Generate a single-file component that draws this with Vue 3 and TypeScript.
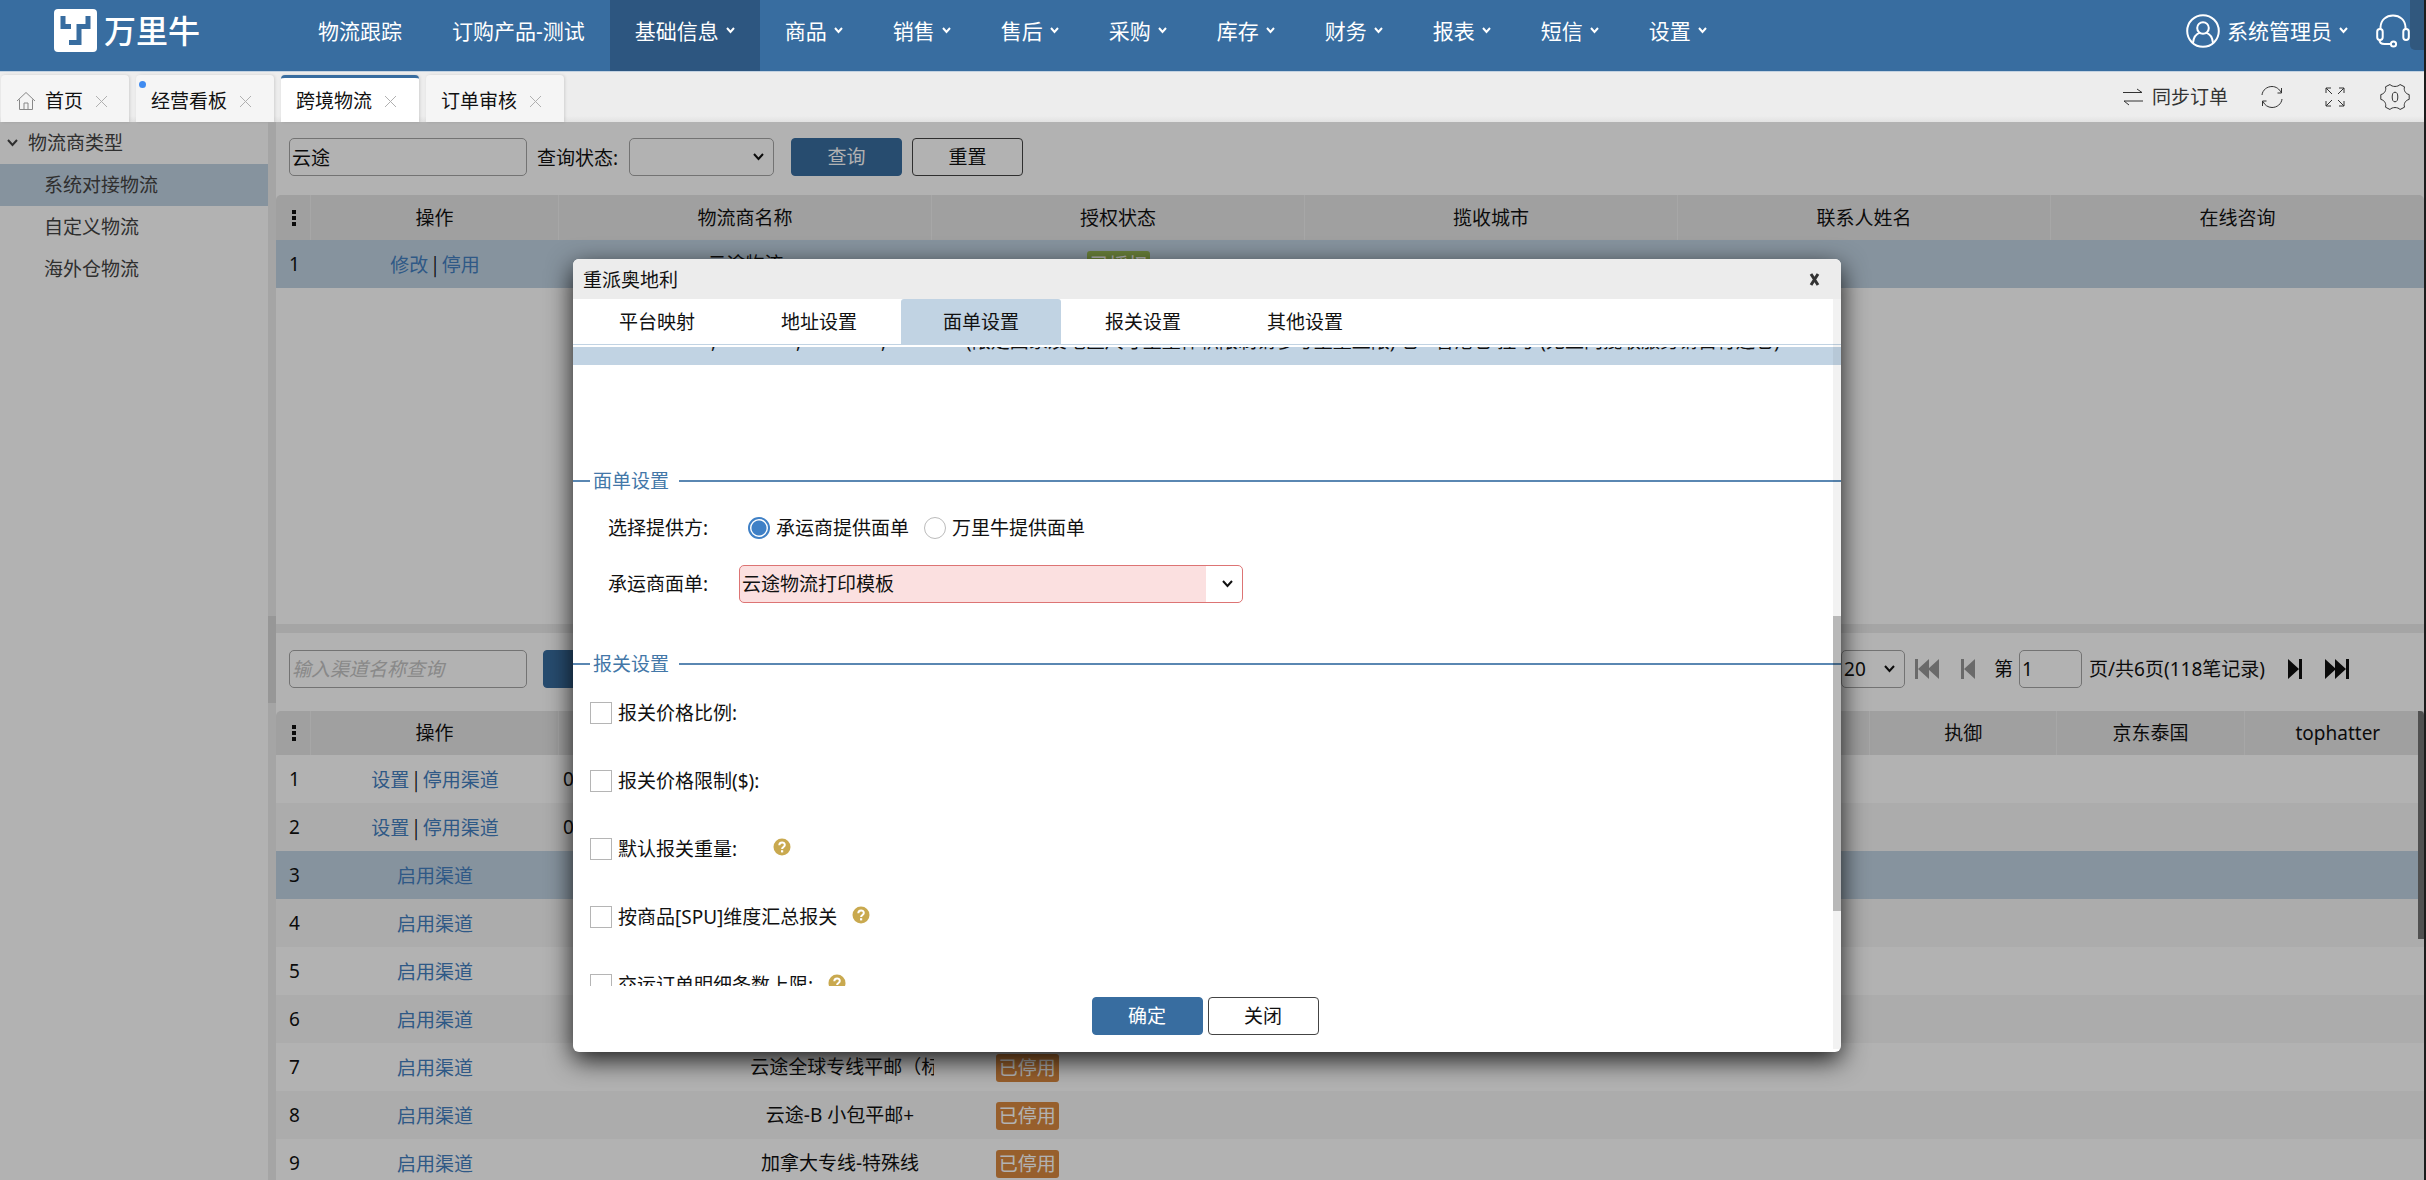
<script setup lang="ts">
import { ref } from 'vue'

interface NavItem {
  label: string
  menu: boolean
  active?: boolean
}
interface PageTab {
  label: string
  home?: boolean
  dot?: boolean
  active?: boolean
}
interface Channel {
  no: number
  enabled: boolean
  code: string
  name: string
}
interface Option {
  label: string
  wideGap: boolean
  help: boolean
  checked: boolean
}

const navItems: NavItem[] = [
  { label: '物流跟踪', menu: false },
  { label: '订购产品-测试', menu: false },
  { label: '基础信息', menu: true, active: true },
  { label: '商品', menu: true },
  { label: '销售', menu: true },
  { label: '售后', menu: true },
  { label: '采购', menu: true },
  { label: '库存', menu: true },
  { label: '财务', menu: true },
  { label: '报表', menu: true },
  { label: '短信', menu: true },
  { label: '设置', menu: true },
]

const pageTabs: PageTab[] = [
  { label: '首页', home: true },
  { label: '经营看板', dot: true },
  { label: '跨境物流', active: true },
  { label: '订单审核' },
]

const logisticsTypes = ['系统对接物流', '自定义物流', '海外仓物流']
const providerColumns = ['物流商名称', '授权状态', '揽收城市', '联系人姓名', '在线咨询']
const channelColumns = ['', '', '', '', '', '', '', '执御', '京东泰国', 'tophatter']

const channels: Channel[] = [
  { no: 1, enabled: true, code: '0', name: '' },
  { no: 2, enabled: true, code: '0', name: '' },
  { no: 3, enabled: false, code: '', name: '' },
  { no: 4, enabled: false, code: '', name: '' },
  { no: 5, enabled: false, code: '', name: '' },
  { no: 6, enabled: false, code: '', name: '' },
  { no: 7, enabled: false, code: '', name: '云途全球专线平邮（标' },
  { no: 8, enabled: false, code: '', name: '云途-B 小包平邮+' },
  { no: 9, enabled: false, code: '', name: '加拿大专线-特殊线' },
]

const dialogTabs = ['平台映射', '地址设置', '面单设置', '报关设置', '其他设置']

const keyword = ref('云途')
const channelKeyword = ref('')
const status = ref('')
const pageSize = ref('20')
const page = ref('1')
const provider = ref('carrier')
const template = ref('云途物流打印模板')
const options = ref<Option[]>([
  { label: '报关价格比例:', wideGap: false, help: false, checked: false },
  { label: '报关价格限制($):', wideGap: false, help: false, checked: false },
  { label: '默认报关重量:', wideGap: true, help: true, checked: false },
  { label: '按商品[SPU]维度汇总报关', wideGap: false, help: true, checked: false },
  { label: '交运订单明细条数上限:', wideGap: false, help: true, checked: false },
])
</script>

<template>
  <div class="app">
    <header class="topbar">
      <div class="logo">
        <svg class="logo-mark" viewBox="0 0 43 43">
          <rect width="43" height="43" rx="4" fill="#fff" />
          <path d="M9 7v10.500h8M34 7v10.500h-9v16h-10" fill="none" stroke="#386da0" stroke-width="5" />
        </svg>
        <span class="logo-name">万里牛</span>
      </div>
      <nav class="nav">
        <a v-for="n in navItems" :key="n.label" href="#" class="nav-item" :class="{ active: n.active }">
          <span>{{ n.label }}</span>
          <svg v-if="n.menu" class="nav-arrow" viewBox="0 0 9 7"><path d="M1 1l3.500 4L8 1" /></svg>
        </a>
      </nav>
      <div class="account">
        <a href="#" class="user">
          <svg class="avatar" viewBox="0 0 34 34">
            <circle cx="17" cy="17" r="15.800" />
            <circle cx="17" cy="14" r="5.800" />
            <path d="M7 29c.5-6 4-9.500 7.200-10.400M27 29c-.5-6-4-9.500-7.200-10.400" />
          </svg>
          <span>系统管理员</span>
          <svg class="nav-arrow" viewBox="0 0 9 7"><path d="M1 1l3.500 4L8 1" /></svg>
        </a>
        <button class="icon-button" aria-label="客服">
          <svg class="headset" viewBox="0 0 34 34">
            <path d="M4.500 16V13C5 6 10 1.500 17 1.500S29 6 29.500 13v3" />
            <rect x="1.200" y="15" width="5.500" height="11" rx="2.700" />
            <rect x="27.300" y="15" width="5.500" height="11" rx="2.700" />
            <path d="M3.500 26c0 3 2 4 5 4h6" />
            <circle cx="17.500" cy="30" r="2.600" />
          </svg>
        </button>
      </div>
      <div class="corner"></div>
    </header>

    <div class="tabbar">
      <div v-for="t in pageTabs" :key="t.label" class="page-tab" :class="{ active: t.active, home: t.home }">
        <svg v-if="t.home" class="home-icon" viewBox="0 0 20 20">
          <path d="M1 10L10 1.500 19 10M3.500 8.500V18.500h13V8.500M8 18v-6h4v6" />
        </svg>
        <span>{{ t.label }}</span>
        <button class="tab-close" :aria-label="'关闭' + t.label">
          <svg viewBox="0 0 13 13"><path d="M1 1l11 11M12 1L1 12" /></svg>
        </button>
        <i v-if="t.dot" class="dot"></i>
      </div>
      <div class="tools">
        <button class="tool sync">
          <svg width="20" height="18" viewBox="0 0 20 18"><path d="M0 4.500h19L14 1M20 13H1l5 4" /></svg>
          <span>同步订单</span>
        </button>
        <button class="tool refresh" aria-label="刷新">
          <svg width="22" height="24" viewBox="0 0 22 24">
            <path d="M1 10C1.500 5 6 1.500 11 1.500c4 0 7.500 2.500 9 6M20.500 3v5h-4M21 14c-.5 5-5 8.500-10 8.500-4 0-7.500-2.500-9-6M1.500 21v-5h4" />
          </svg>
        </button>
        <button class="tool expand" aria-label="全屏">
          <svg width="20" height="20" viewBox="0 0 20 20">
            <path d="M1 6V1h5M1 1l6 6M14 1h5v5M19 1l-6 6M1 14v5h5M1 19l6-6M14 19h5v-5M19 19l-6-6" />
          </svg>
        </button>
        <button class="tool gear" aria-label="设置">
          <svg width="30" height="28" viewBox="0 0 30 28">
            <path
              d="M10 1.500c2 2.600 8 2.600 10 0l4.500 2.300c-1 3.600 1 7 4.700 7.800v4.800c-3.700.8-5.700 4.200-4.700 7.800L20 26.500c-2-2.600-8-2.600-10 0l-4.500-2.300c1-3.600-1-7-4.700-7.800v-4.800c3.700-.8 5.700-4.200 4.700-7.800z"
            />
            <ellipse cx="15" cy="14" rx="2.800" ry="4.800" />
          </svg>
        </button>
      </div>
    </div>

    <div class="workspace">
      <aside class="sidebar">
        <div class="tree-root">
          <svg class="chevron" viewBox="0 0 11 8"><path d="M1 1l4.500 5L10 1" /></svg>
          <span>物流商类型</span>
        </div>
        <a v-for="(l, i) in logisticsTypes" :key="l" href="#" class="tree-item" :class="{ selected: i === 0 }">{{ l }}</a>
      </aside>
      <div class="v-splitter"><i class="grip"></i></div>

      <main class="content">
        <section class="pane providers">
          <form class="filters" @submit.prevent>
            <input v-model="keyword" class="field search" type="text" aria-label="物流商名称" />
            <label class="status-label" for="status">查询状态:</label>
            <span class="select-wrap status-select">
              <select id="status" v-model="status" class="field"><option value=""></option></select>
              <svg class="chevron" viewBox="0 0 11 8"><path d="M1 1l4.500 5L10 1" /></svg>
            </span>
            <button class="btn primary query">查询</button>
            <button class="btn reset">重置</button>
          </form>
          <table class="grid">
            <colgroup><col class="c-no" /><col class="c-op" /><col v-for="c in providerColumns" :key="c" /></colgroup>
            <thead>
              <tr>
                <th class="no"><svg class="dots" viewBox="0 0 5 16"><path d="M1 0h4v4h-4zM1 6h4v4h-4zM1 12h4v4h-4z" /></svg></th>
                <th>操作</th>
                <th v-for="c in providerColumns" :key="c">{{ c }}</th>
              </tr>
            </thead>
            <tbody>
              <tr class="selected">
                <td class="no">1</td>
                <td class="op"><a href="#">修改</a> | <a href="#">停用</a></td>
                <td>云途物流</td>
                <td><span class="tag green">已授权</span></td>
                <td></td>
                <td></td>
                <td></td>
              </tr>
            </tbody>
          </table>
        </section>

        <div class="h-splitter"></div>

        <section class="pane channels">
          <form class="filters lower" @submit.prevent>
            <input v-model="channelKeyword" class="field search" type="text" placeholder="输入渠道名称查询" aria-label="渠道名称" />
            <button class="btn primary channel-query" aria-label="查询渠道"></button>
            <div class="pager">
              <span class="select-wrap size-select">
                <select v-model="pageSize" class="field" aria-label="每页条数"><option>20</option></select>
                <svg class="chevron" viewBox="0 0 11 8"><path d="M1 1l4.500 5L10 1" /></svg>
              </span>
              <button class="page-button first" disabled aria-label="首页">
                <svg width="24" height="20" viewBox="0 0 24 20"><path d="M0 0h3v20H0zM14 0v20L3 10zM24 0v20L13 10z" /></svg>
              </button>
              <button class="page-button prev" disabled aria-label="上一页">
                <svg width="14" height="20" viewBox="0 0 14 20"><path d="M0 0h3v20H0zM14 0v20L3 10z" /></svg>
              </button>
              <label for="page">第</label>
              <input id="page" v-model="page" class="field page-input" type="text" />
              <span>页/共6页(118笔记录)</span>
              <button class="page-button next" aria-label="下一页">
                <svg width="14" height="20" viewBox="0 0 14 20"><path d="M11 0h3v20h-3zM0 0v20l11-10z" /></svg>
              </button>
              <button class="page-button last" aria-label="末页">
                <svg width="24" height="20" viewBox="0 0 24 20"><path d="M21 0h3v20h-3zM10 0v20l11-10zM0 0v20l11-10z" /></svg>
              </button>
            </div>
          </form>
          <div class="channel-grid">
            <table class="grid striped">
              <colgroup><col class="c-no" /><col class="c-op" /><col v-for="(c, i) in channelColumns" :key="i" /></colgroup>
              <thead>
                <tr>
                  <th class="no"><svg class="dots" viewBox="0 0 5 16"><path d="M1 0h4v4h-4zM1 6h4v4h-4zM1 12h4v4h-4z" /></svg></th>
                  <th>操作</th>
                  <th v-for="(c, i) in channelColumns" :key="i">{{ c }}</th>
                </tr>
              </thead>
              <tbody>
                <tr v-for="c in channels" :key="c.no" :class="{ selected: c.no === 3 }">
                  <td class="no">{{ c.no }}</td>
                  <td v-if="c.enabled" class="op"><a href="#">设置</a> | <a href="#">停用渠道</a></td>
                  <td v-else class="op"><a href="#">启用渠道</a></td>
                  <td class="code">{{ c.code }}</td>
                  <td class="name">{{ c.name }}</td>
                  <td><span v-if="c.name" class="tag orange">已停用</span></td>
                  <td v-for="k in 7" :key="k"></td>
                </tr>
              </tbody>
            </table>
            <i class="grid-scroll"></i>
          </div>
        </section>
      </main>

      <div class="mask">
        <div class="dialog" role="dialog" aria-labelledby="dialog-title">
          <div class="dialog-head">
            <h2 id="dialog-title">重派奥地利</h2>
            <button class="dialog-close" aria-label="关闭">
              <svg width="11" height="13" viewBox="0 0 11 13"><path d="M2 1l7 11M9 1L2 12" /></svg>
            </button>
          </div>
          <div class="dialog-main">
            <div class="dialog-tabs" role="tablist">
              <button v-for="(t, i) in dialogTabs" :key="t" role="tab" class="dialog-tab" :class="{ active: i === 2 }">{{ t }}</button>
            </div>
            <div class="dialog-scroll">
              <div class="dialog-content">
                <div class="summary-row">
                  <span class="mark">,</span><span class="mark">,</span><span class="mark">,</span>
                  <span>(限定国家及地区尺寸重量体积限制请参考重量上限) 仓 - 香港仓 挂号 (无上门揽收服务请自行送仓)</span>
                </div>
                <div class="section-title first"><span>面单设置</span></div>
                <div class="form-row">
                  <span class="form-label">选择提供方:</span>
                  <label class="radio"><input v-model="provider" type="radio" name="provider" value="carrier" />承运商提供面单</label>
                  <label class="radio"><input v-model="provider" type="radio" name="provider" value="wln" />万里牛提供面单</label>
                </div>
                <div class="form-row">
                  <label class="form-label" for="template">承运商面单:</label>
                  <span class="select-wrap template-select">
                    <select id="template" v-model="template" class="field"><option>云途物流打印模板</option></select>
                    <svg class="chevron" viewBox="0 0 11 8"><path d="M1 1l4.500 5L10 1" /></svg>
                  </span>
                </div>
                <div class="section-title"><span>报关设置</span></div>
                <div v-for="o in options" :key="o.label" class="option">
                  <label><input v-model="o.checked" type="checkbox" /><span>{{ o.label }}</span></label>
                  <svg v-if="o.help" class="help" :class="{ wide: o.wideGap }" viewBox="0 0 18 18">
                    <circle cx="9" cy="9" r="8.500" fill="#c9a94f" />
                    <path d="M6.300 7.200C6.300 3.500 11.900 3.600 11.800 7c0 1.900-2.700 2-2.700 3.900" fill="none" stroke="#fff" stroke-width="2" />
                    <rect x="8" y="12.200" width="2.200" height="2.200" fill="#fff" />
                  </svg>
                </div>
              </div>
            </div>
            <div class="dialog-foot">
              <button class="btn primary">确定</button>
              <button class="btn">关闭</button>
            </div>
            <div class="dialog-track"><i></i></div>
          </div>
        </div>
      </div>
    </div>
  </div>
</template>

<style>
body {
  margin: 0;
  overflow: hidden;
}
</style>

<style scoped>
.app,
.app * {
  box-sizing: border-box;
}
.app {
  display: flex;
  flex-direction: column;
  height: 100vh;
  border-right: 2px solid #1c1c1c;
  font: 19px/28px 'Noto Sans', 'Noto Sans CJK SC', sans-serif;
  color: #111;
  background: #fff;
}
button,
input,
select {
  margin: 0;
  font: inherit;
  color: inherit;
}
button {
  padding: 0;
  border: 0;
  background: none;
}
a {
  color: #4480c0;
  text-decoration: none;
}
svg {
  flex: none;
  fill: none;
  stroke: currentColor;
}

/* top bar */
.topbar {
  position: relative;
  display: flex;
  flex: none;
  height: 71px;
  background: #386da0;
  color: #fff;
  font-size: 21px;
}
.logo {
  display: flex;
  align-items: center;
  gap: 7px;
  width: 293px;
  padding: 0 0 10px 54px;
}
.logo-mark {
  width: 43px;
  height: 43px;
  stroke: none;
}
.logo-name {
  font-size: 32px;
  line-height: 43px;
  font-weight: 500;
}
.nav {
  display: flex;
}
.nav-item {
  display: flex;
  align-items: center;
  gap: 7px;
  padding: 0 25px 10px;
  color: #fff;
  white-space: nowrap;
}
.nav-item.active {
  background: #2d5680;
}
.nav-arrow {
  width: 9px;
  height: 7px;
  stroke-width: 2;
}
.account {
  display: flex;
  align-items: center;
  gap: 28px;
  margin-left: auto;
  padding: 0 14px 10px 0;
}
.user {
  display: flex;
  align-items: center;
  gap: 7px;
  color: #fff;
}
.avatar,
.headset {
  display: block;
  width: 34px;
  height: 34px;
  stroke-width: 2;
}
.corner {
  position: absolute;
  top: 0;
  right: 0;
  width: 14px;
  height: 50px;
  border-radius: 0 0 0 5px;
  background: #31587e;
}

/* page tabs */
.tabbar {
  display: flex;
  flex: none;
  gap: 7px;
  height: 51px;
  padding: 3px 14px 0 1px;
  border-top: 1px solid #c3d2e1;
  background: linear-gradient(#ededed 88%, #e2e2e2);
}
.page-tab {
  position: relative;
  display: flex;
  align-items: center;
  gap: 12px;
  width: 138px;
  padding: 5px 0 0 15px;
  border-radius: 4px 4px 0 0;
  background: #f5f5f5;
  box-shadow: 1px 0 3px rgba(0, 0, 0, 0.12);
}
.page-tab.home {
  width: 128px;
}
.page-tab.active {
  padding-top: 2px;
  border-top: 3px solid #386da0;
  background: #fff;
}
.home-icon {
  width: 20px;
  height: 20px;
  margin-right: -3px;
  color: #888;
}
.tab-close {
  width: 13px;
  height: 13px;
  color: #b0b0b0;
}
.tab-close svg {
  display: block;
}
.dot {
  position: absolute;
  top: 6px;
  left: 3px;
  width: 7px;
  height: 7px;
  border-radius: 50%;
  background: #3f8bf0;
}
.tools {
  display: flex;
  align-items: center;
  margin-left: auto;
  padding-bottom: 4px;
  color: #333;
}
.tool svg {
  display: block;
}
.sync {
  display: flex;
  align-items: center;
  gap: 9px;
}
.refresh {
  margin-left: 33px;
}
.expand {
  margin-left: 42px;
}
.gear {
  margin-left: 35px;
}

/* workspace */
.workspace {
  position: relative;
  display: flex;
  flex: 1;
  min-height: 0;
}
.sidebar {
  flex: none;
  width: 268px;
  color: #444;
}
.tree-root {
  display: flex;
  align-items: center;
  gap: 10px;
  height: 42px;
  padding-left: 7px;
}
.chevron {
  width: 11px;
  height: 8px;
  stroke-width: 2;
}
.tree-item {
  display: flex;
  align-items: center;
  height: 42px;
  padding-left: 44px;
  color: #444;
}
.tree-item.selected {
  background: #c1d3e3;
}
.v-splitter {
  display: flex;
  align-items: center;
  flex: none;
  width: 8px;
  padding-top: 16px;
  background: #ececec;
}
.v-splitter .grip {
  width: 8px;
  height: 87px;
  background: #d8d8d8;
}
.content {
  display: flex;
  flex: 1;
  flex-direction: column;
  min-width: 0;
}
.pane {
  overflow: hidden;
}
.providers {
  flex: 502 1 0;
}
.channels {
  display: flex;
  flex: 547 1 0;
  flex-direction: column;
}
.h-splitter {
  flex: none;
  height: 9px;
  background: #ececec;
}

/* filters */
.filters {
  display: flex;
  flex: none;
  height: 73px;
  padding: 16px 0 0 13px;
}
.filters.lower {
  height: 78px;
  padding-top: 17px;
}
.field {
  width: 100%;
  height: 38px;
  padding: 0 2px;
  border: 1px solid #a5a5a5;
  border-radius: 5px;
  outline: 0;
  background: #fff;
  appearance: none;
}
.search {
  width: 238px;
}
.search::placeholder {
  color: #c4c4c4;
  font-style: italic;
}
.status-label {
  margin: 6px 11px 0 10px;
}
.select-wrap {
  position: relative;
  display: block;
}
.select-wrap .chevron {
  position: absolute;
  top: 15px;
  right: 10px;
  pointer-events: none;
}
.status-select {
  width: 145px;
}
.btn {
  width: 111px;
  height: 38px;
  border: 1px solid #444;
  border-radius: 4px;
  background: #fff;
}
.btn.primary {
  border-color: #386da0;
  background: #386da0;
  color: #fff;
}
.query {
  margin: 0 10px 0 17px;
}
.channel-query {
  margin-left: 16px;
}
.pager {
  display: flex;
  align-items: center;
  height: 38px;
  margin-left: auto;
  padding-right: 75px;
}
.size-select {
  width: 64px;
  margin-right: 10px;
}
.page-button svg {
  display: block;
  fill: currentColor;
  stroke: none;
}
.page-button:disabled {
  color: #999;
}
.prev {
  margin: 0 19px 0 22px;
}
.page-input {
  width: 63px;
  margin: 0 7px 0 6px;
}
.next {
  margin: 0 23px;
}

/* tables */
.grid {
  width: 100%;
  border-spacing: 0;
  table-layout: fixed;
}
.c-no {
  width: 35px;
}
.c-op {
  width: 248px;
}
.grid th {
  height: 45px;
  padding: 0;
  border-right: 1px solid #f0f0f0;
  background: #e5e5e5;
  font-weight: 400;
}
.grid th:first-child {
  border-top-left-radius: 5px;
}
.providers th:last-child {
  border-right: 0;
  border-top-right-radius: 5px;
}
.grid td {
  height: 48px;
  padding: 0 1px;
  overflow: hidden;
  text-align: center;
  white-space: nowrap;
}
.grid .no {
  padding-left: 13px;
  text-align: left;
}
.grid .op {
  font-family: 'Noto Sans CJK SC', sans-serif;
}
.grid .code {
  padding-left: 4px;
  text-align: left;
}
.grid .name {
  padding: 0 4px;
}
.striped th {
  height: 44px;
}
.striped tr:nth-child(even) td {
  background: #f7f7f7;
}
.grid tr.selected td {
  background: #c1d3e3;
}
.dots {
  display: block;
  width: 5px;
  height: 16px;
  margin-left: 2px;
  fill: #111;
  stroke: none;
}
.tag {
  display: inline-block;
  padding: 0 3px;
  border-radius: 3px;
  color: #fff;
  line-height: 28px;
  vertical-align: middle;
}
.tag.green {
  background: #97b854;
}
.tag.orange {
  background: #d98940;
}
.channel-grid {
  position: relative;
  flex: 1;
  overflow: hidden;
}
.channel-grid .grid {
  width: calc(100% + 8px);
}
.grid-scroll {
  position: absolute;
  top: 0;
  right: 0;
  width: 6px;
  height: 228px;
  border-radius: 0 4px 0 0;
  background: #737373;
}

/* dialog */
.mask {
  position: absolute;
  inset: 0;
  display: flex;
  align-items: flex-start;
  justify-content: center;
  padding: 137px 10px 0 0;
  background: rgba(0, 0, 0, 0.3);
}
.dialog {
  width: 1268px;
  max-width: 90%;
  border-radius: 6px;
  background: #fff;
  box-shadow: 0 8px 26px rgba(0, 0, 0, 0.85);
}
.dialog-head {
  display: flex;
  align-items: center;
  justify-content: space-between;
  height: 40px;
  padding: 1px 21px 0 10px;
  border-radius: 6px 6px 0 0;
  background: #ececec;
}
.dialog-head h2 {
  margin: 0;
  font-size: 19px;
  font-weight: 400;
}
.dialog-close svg {
  display: block;
  color: #333;
  stroke-width: 3;
}
.dialog-main {
  position: relative;
}
.dialog-tabs {
  display: flex;
  gap: 2px;
  height: 46px;
  padding-left: 4px;
  border-bottom: 1px solid #c1d3e3;
}
.dialog-tab {
  width: 160px;
}
.dialog-tab.active {
  border-radius: 3px 3px 0 0;
  background: #c1d3e3;
}
.dialog-scroll {
  height: 639px;
  margin-top: 2px;
  overflow: hidden;
}
.dialog-content {
  margin-top: -30px;
}
.summary-row {
  display: flex;
  align-items: center;
  height: 48px;
  padding-left: 138px;
  background: #c1d3e3;
  line-height: 20px;
  white-space: nowrap;
}
.summary-row .mark {
  width: 85px;
}
.section-title {
  display: flex;
  align-items: center;
  gap: 10px;
  margin: 38px 0 21px;
  color: #4377a8;
}
.section-title.first {
  margin: 102px 0 5px;
}
.section-title::before,
.section-title::after {
  content: '';
  width: 17px;
  height: 2px;
  background: #5a87b2;
}
.section-title::before {
  margin-right: -7px;
}
.section-title::after {
  flex: 1;
}
.form-row {
  display: flex;
  align-items: center;
  height: 56px;
  padding-left: 35px;
}
.form-label {
  width: 131px;
}
.radio {
  display: flex;
  align-items: center;
  gap: 6px;
  margin-right: 6px;
  padding-left: 9px;
}
.radio input {
  width: 22px;
  height: 22px;
  border: 1px solid #bbb;
  border-radius: 50%;
  background: #fff;
  appearance: none;
}
.radio input:checked {
  border: 2px solid #3f80c6;
  background: radial-gradient(circle, #3f80c6 7px, #fff 8px);
}
.template-select {
  width: 504px;
}
.template-select .field {
  border-color: #dd7474;
  background: linear-gradient(to left, #fff 36px, #fbe0e0 36px);
}
.option {
  display: flex;
  align-items: flex-start;
  height: 68px;
}
.option label {
  display: flex;
  align-items: center;
  gap: 6px;
  padding-left: 17px;
}
.option input {
  width: 22px;
  height: 22px;
  border: 1px solid #b5b5b5;
  background: #fff;
  appearance: none;
}
.help {
  width: 18px;
  height: 18px;
  margin: 3px 0 0 15px;
  stroke: none;
}
.help.wide {
  margin-left: 36px;
}
.dialog-foot {
  display: flex;
  justify-content: center;
  gap: 5px;
  height: 66px;
  padding: 11px 4px 0 0;
}
.dialog-track {
  position: absolute;
  top: 0;
  right: 0;
  bottom: 3px;
  display: flex;
  width: 8px;
  padding-top: 317px;
  background: rgba(0, 0, 0, 0.05);
}
.dialog-track i {
  width: 8px;
  height: 295px;
  background: rgba(0, 0, 0, 0.24);
}
</style>
